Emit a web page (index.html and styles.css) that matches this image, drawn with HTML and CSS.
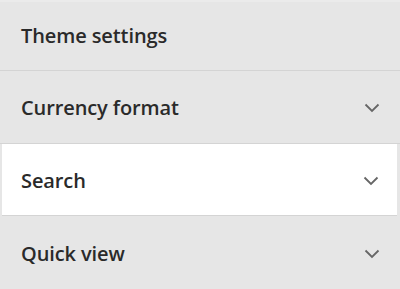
FILE: index.html
```html
<!DOCTYPE html>
<html>
<head>
<meta charset="utf-8">
<link rel="stylesheet" href="styles.css">
</head>
<body>
<div class="panel">
  <div class="row header"><span class="label">Theme settings</span></div>
  <div class="row first"><span class="label">Currency format</span>
    <svg class="chev" width="16" height="10" viewBox="0 0 16 10"><path d="M1.5 1.5 L8 8 L14.5 1.5" fill="none" stroke="#666" stroke-width="1.8"/></svg></div>
  <div class="row active"><span class="label">Search</span>
    <svg class="chev" width="16" height="10" viewBox="0 0 16 10"><path d="M1.5 1.5 L8 8 L14.5 1.5" fill="none" stroke="#666" stroke-width="1.8"/></svg></div>
  <div class="row last"><span class="label">Quick view</span>
    <svg class="chev" width="16" height="10" viewBox="0 0 16 10"><path d="M1.5 1.5 L8 8 L14.5 1.5" fill="none" stroke="#666" stroke-width="1.8"/></svg></div>
</div>
</body>
</html>
```
FILE: styles.css
```css
html, body { margin: 0; padding: 0; background: #e6e6e6; }
.panel {
  width: 400px;
  height: 289px;
  display: flex;
  flex-direction: column;
  font-family: "Open Sans", "Noto Sans", sans-serif;
  border-top: 2px solid #ebebeb;
  box-sizing: border-box;
}
.row {
  height: 72px;
  flex: none;
  display: flex;
  align-items: center;
  justify-content: space-between;
  padding: 0 20px 0 21px;
  border-bottom: 1px solid #d4d4d4;
  box-sizing: border-box;
  background: #e6e6e6;
}
.header { height: 69px; padding-bottom: 1px; }
.first { height: 73px; padding-top: 1px; }
.last { border-bottom: none; flex: 1; padding-top: 2px; }
.active { background: #fff; margin: 0 3px 0 2px; padding: 2px 18px 0 19px; }
.label {
  font-size: 20px;
  font-weight: 550;
  color: #2a2a2a;
  letter-spacing: -0.1px;
}
.chev { display: block; }
```
